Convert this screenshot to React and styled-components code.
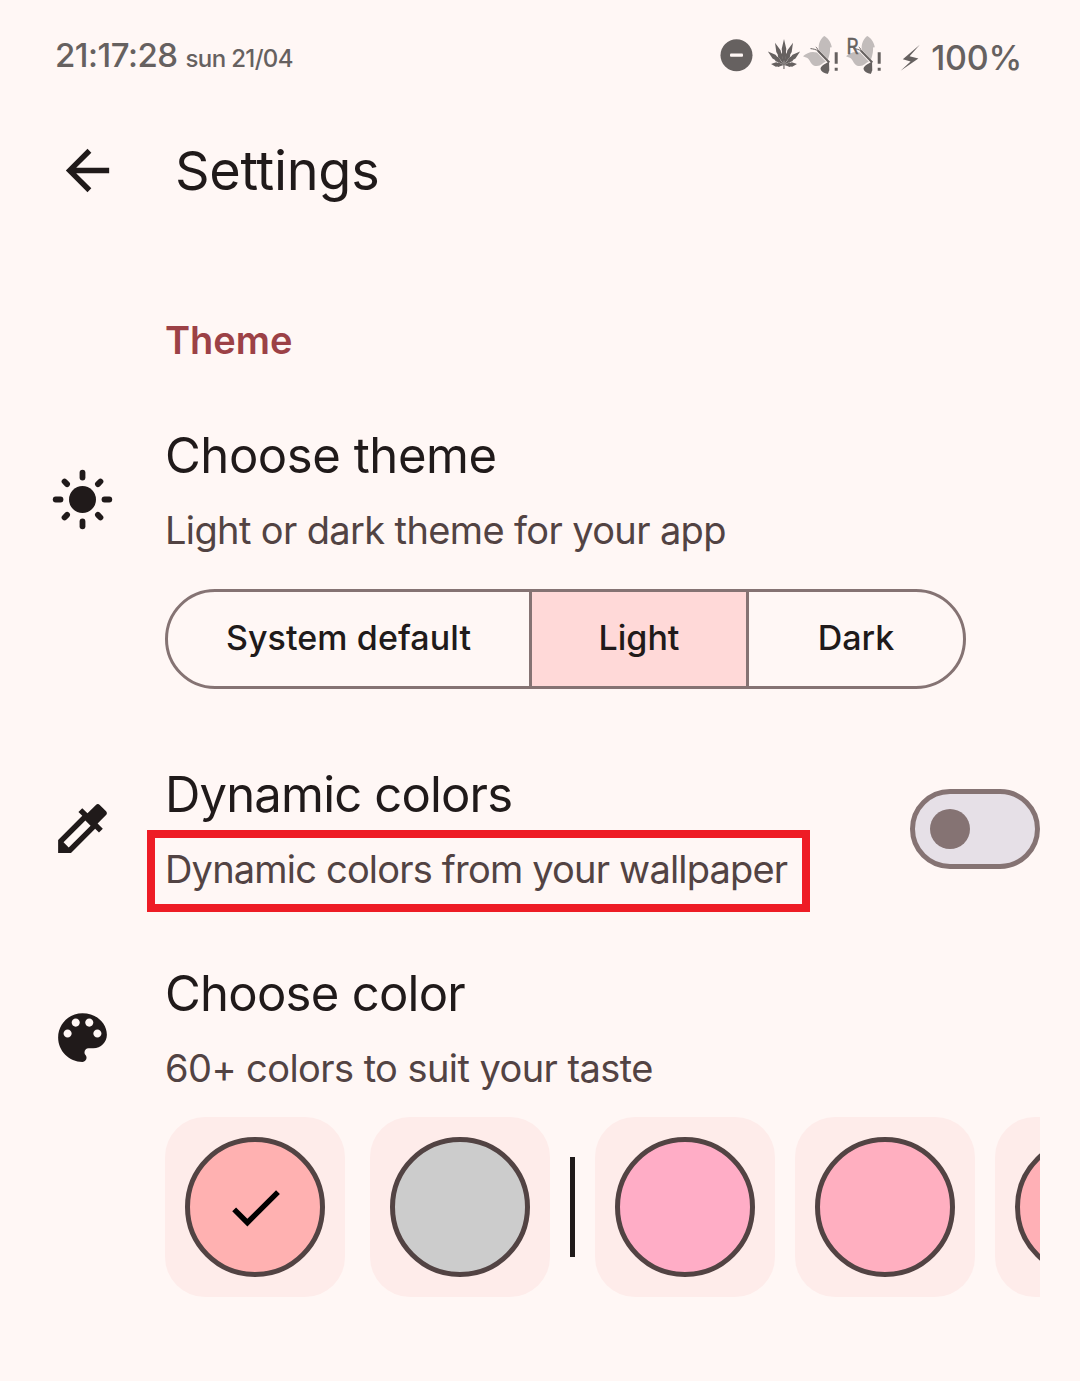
import React from "react";
import styled, { createGlobalStyle } from "styled-components";

const Global = createGlobalStyle`
  * { box-sizing: border-box; }
  body { margin: 0; background: #fff7f5; font-family: Inter, "Liberation Sans", sans-serif; color: #201a1a; }
  svg { display: block; flex: none; }
`;
const Screen = styled.main`
  width: 1080px; height: 1381px; overflow: hidden; background: #fff7f5;
  display: flex; flex-direction: column;
`;
const StatusBar = styled.header`
  height: 110px; padding: 0 58px 0 55px; display: flex; justify-content: space-between; color: #666160;
`;
const Clock = styled.div`
  display: flex; align-items: baseline; gap: 8px; height: 50px; margin-top: 30px; line-height: 50px;
`;
const Label = styled.span`
  font-size: ${(p) => p.$size}px;
  font-weight: ${(p) => p.$weight || 400};
  letter-spacing: ${(p) => p.$track || 0}px;
  white-space: nowrap;
`;
const Indicators = styled.div`
  display: flex; align-items: center; height: 50px; margin-top: 30px;
`;
const Battery = styled.div`
  margin: 6px 0 0 10px; line-height: 50px; display: flex;
`;
const TopBar = styled.nav`
  height: 120px; padding-left: 55px; display: flex; align-items: center; gap: 55px;
`;
const Title = styled.h1`
  margin: 0; padding-top: 2px; font-weight: 400; line-height: 1; display: flex;
`;
const SectionTitle = styled.h2`
  margin: 85px 0 60px 165px; height: 50px; line-height: 50px; color: #9c4146; display: flex;
`;
const Row = styled.section`
  display: flex; gap: 50px; align-items: center;
  padding: 0 40px 0 50px; margin-bottom: ${(p) => p.$after || 0}px;
`;
const IconCell = styled.div`
  flex: none; width: 65px; display: flex; justify-content: center; padding-bottom: ${(p) => p.$lift || 0}px;
`;
const Body = styled.div` flex: 1; min-width: 0; display: flex; flex-direction: column; `;
const RowTitle = styled.div` height: 61px; line-height: 62px; margin-bottom: 19px; `;
const RowText = styled.div`
  position: relative; align-self: flex-start; height: 50px; line-height: 51px; color: #524343;
`;
const Highlight = styled.div`
  position: absolute; left: -18px; top: -14px; width: 663px; height: 82px; border: 8px solid #ee1c25;
`;
const Segments = styled.div`
  margin-top: 34px; width: 801px; height: 100px; display: flex; border: 3px solid #857373;
  border-radius: 50px; overflow: hidden;
`;
const Segment = styled.button`
  border: 0; border-left: ${(p) => (p.$first ? 0 : 3)}px solid #857373; padding: 0 0 4px; margin: 0;
  width: ${(p) => p.$width}px; background: ${(p) => (p.$active ? "#ffd9d8" : "transparent")};
  color: #201a1a; font-family: inherit; display: flex; align-items: center; justify-content: center;
`;
const Switch = styled.div`
  flex: none; width: 130px; height: 80px; border: 5px solid #857373; border-radius: 40px; background: #e6e0e7;
  display: flex; align-items: center; padding-left: 15px;
`;
const Thumb = styled.div` width: 40px; height: 40px; border-radius: 50%; background: #857373; `;
const Swatches = styled.div`
  margin-top: 24px; display: flex; align-items: center; gap: 20px; overflow: hidden; height: 180px;
`;
const Tile = styled.div`
  flex: none; width: 180px; height: 180px; border-radius: 40px; background: #feecea; padding: 20px;
  margin-right: ${(p) => p.$after || 0}px;
`;
const Dot = styled.div`
  width: 140px; height: 140px; border-radius: 50%; border: 5px solid #524343; background: ${(p) => p.$color};
  display: flex; align-items: center; justify-content: center;
`;
const Divider = styled.div` flex: none; width: 5px; height: 100px; background: #201a1a; `;

const Icon = ({ d, size = 65, color = "#201a1a" }) => (
  <svg width={size} height={size} viewBox="0 0 24 24" fill={color}><path d={d} /></svg>
);
const BACK = "M20 11H7.83l5.59-5.59L12 4l-8 8 8 8 1.41-1.41L7.83 13H20v-2z";
const CHECK = "M9 16.17L4.83 12l-1.42 1.41L9 19 21 7l-1.41-1.41z";
const DROPPER = "M20.71 5.63l-2.34-2.34c-.39-.39-1.02-.39-1.41 0l-3.12 3.12-1.93-1.91-1.41 1.41 1.42 1.42L3 16.25V21h4.75l8.92-8.92 1.42 1.42 1.41-1.41-1.92-1.92 3.12-3.12c.4-.4.4-1.03.01-1.42zM6.92 19L5 17.08l8.06-8.06 1.92 1.92L6.92 19z";
const PALETTE = "M12 3c-4.97 0-9 4.03-9 9s4.03 9 9 9c.83 0 1.5-.67 1.5-1.5 0-.39-.15-.74-.39-1.01-.23-.26-.38-.61-.38-.99 0-.83.67-1.5 1.5-1.5H16c2.76 0 5-2.24 5-5 0-4.42-4.03-8-9-8zm-5.5 9c-.83 0-1.5-.67-1.5-1.5S5.67 9 6.5 9 8 9.67 8 10.5 7.33 12 6.5 12zm3-4C8.67 8 8 7.33 8 6.5S8.67 5 9.5 5s1.5.67 1.5 1.5S10.33 8 9.5 8zm5 0c-.83 0-1.5-.67-1.5-1.5S13.67 5 14.5 5s1.5.67 1.5 1.5S15.33 8 14.5 8zm3 4c-.83 0-1.5-.67-1.5-1.5S16.67 9 17.5 9s1.5.67 1.5 1.5-.67 1.5-1.5 1.5z";

const Sun = () => (
  <svg width="61" height="61" viewBox="-30.5 -30.5 61 61" stroke="#201a1a" strokeWidth="5.8" strokeLinecap="round">
    <circle r="13.5" fill="#201a1a" stroke="none" />
    {[0, 90, 180, 270].map((a) => <line key={a} x1="0" x2="0" y1="-22" y2="-26.8" transform={`rotate(${a})`} />)}
    {[45, 135, 225, 315].map((a) => <line key={a} x1="0" x2="0" y1="-21.8" y2="-25.4" transform={`rotate(${a})`} />)}
  </svg>
);

const Leaf = () => (
  <svg width="36" height="50" viewBox="6 0 36 50" fill="#666160">
    {[[0, 26], [-22, 24], [22, 24], [-50, 21], [50, 21], [-86, 13], [86, 13]].map(([a, l]) => (
      <path
        key={a}
        transform={`translate(24 35) rotate(${a})`}
        d={`M0 0L-1.3 ${-l * 0.25}L-2.5 ${-l * 0.42}L-1.9 ${-l * 0.5}L-2.3 ${-l * 0.62}L0 ${-l}L2.3 ${-l * 0.62}L1.9 ${-l * 0.5}L2.5 ${-l * 0.42}L1.3 ${-l * 0.25}Z`}
      />
    ))}
    <path d="M23.4 34h1.1v5h-1.1z" />
  </svg>
);

const Butterfly = ({ letter }) => (
  <svg width="43" height="50" viewBox="42 0 43 50">
    <path fill="#c2bcbb" d="M64.3 6C67.5 7.5 71 12 71.8 17.2L70 17.6C70.3 20 69.8 25 68 29.5L58.8 19.5C58 14 60.5 8.5 64.3 6z" />
    <path fill="#c2bcbb" d="M43 26.2C47 22.5 52 20.8 57 22.6L65.8 31.8C62 32.6 61.5 36.6 55.5 36C51.5 35.5 50.5 31.5 48.5 29C47 27.2 45.5 27.3 43 26.2z" />
    <path fill="#666160" d="M60.5 38.5C61.5 35 66 33.5 69 31.5L69.3 40.5C68.5 41 69 42.8 67.5 44C64.5 43 61 42 60.5 38.5z" />
    <path fill="none" stroke="#666160" strokeWidth="2.1" d="M58 20.8L69.3 32.6" />
    <path fill="none" stroke="#666160" strokeWidth="1" d="M58.5 21.5C56 19.2 53.5 19 50.5 18.6M58.2 21C57.6 18.8 57.2 18 55.8 17" />
    <path fill="#666160" d="M74.7 22.3h3v11.4h-3zM74.7 37.7h3v3h-3z" />
    {letter && <text x="43.4" y="24.2" fontSize="21.5" textLength="12" lengthAdjust="spacingAndGlyphs" fontFamily="Roboto" fill="#666160" stroke="#666160" strokeWidth="0.4">{letter}</text>}
  </svg>
);

export default function App() {
  return (
    <Screen>
      <Global />
      <StatusBar>
        <Clock>
          <Label $size={33} $weight={500} $track={-0.5}>21:17:28</Label>
          <Label $size={24} $weight={500} $track={-0.65}>sun 21/04</Label>
        </Clock>
        <Indicators>
          <svg width="46" height="50" viewBox="720 30 46 50">
            <circle cx="736.5" cy="55.2" r="16" fill="#666160" />
            <rect x="730" y="53.6" width="13" height="3.2" rx="1" fill="#fff7f5" />
          </svg>
          <Leaf />
          <Butterfly />
          <Butterfly letter="R" />
          <svg width="33" height="50" viewBox="888 30 33 50">
            <path d="M919.8 44.8L902.8 59.2 910.6 61.4 900.6 70.8 918.4 58.6 909.6 56.2z" fill="#666160" />
          </svg>
          <Battery><Label $size={34} $weight={500} $track={-0.25}>100%</Label></Battery>
        </Indicators>
      </StatusBar>
      <TopBar>
        <Icon d={BACK} />
        <Title><Label $size={54} $track={-0.3}>Settings</Label></Title>
      </TopBar>
      <SectionTitle><Label $size={38} $weight={600}>Theme</Label></SectionTitle>
      <Row $after={75}>
        <IconCell $lift={115}><Sun /></IconCell>
        <Body>
          <RowTitle><Label $size={49} $track={-0.43}>Choose theme</Label></RowTitle>
          <RowText><Label $size={38} $track={-0.63}>Light or dark theme for your app</Label></RowText>
          <Segments>
            <Segment $first $width={361}><Label $size={34} $weight={500} $track={0.08}>System default</Label></Segment>
            <Segment $active $width={217}><Label $size={34} $weight={500}>Light</Label></Segment>
            <Segment $width={217}><Label $size={34} $weight={500}>Dark</Label></Segment>
          </Segments>
        </Body>
      </Row>
      <Row $after={69}>
        <IconCell $lift={1}><Icon d={DROPPER} /></IconCell>
        <Body>
          <RowTitle><Label $size={49} $track={-0.83}>Dynamic colors</Label></RowTitle>
          <RowText><Label $size={38} $track={-0.81}>Dynamic colors from your wallpaper</Label><Highlight /></RowText>
        </Body>
        <Switch><Thumb /></Switch>
      </Row>
      <Row>
        <IconCell $lift={185}><Icon d={PALETTE} /></IconCell>
        <Body>
          <RowTitle><Label $size={49} $track={-0.73}>Choose color</Label></RowTitle>
          <RowText><Label $size={38} $track={-0.57}>60+ colors to suit your taste</Label></RowText>
          <Swatches>
            <Tile $after={5}><Dot $color="#ffb1b1"><Icon d={CHECK} color="#000" /></Dot></Tile>
            <Tile><Dot $color="#cccccc" /></Tile>
            <Divider />
            <Tile><Dot $color="#ffadc6" /></Tile>
            <Tile><Dot $color="#ffafc0" /></Tile>
            <Tile><Dot $color="#ffb0b6" /></Tile>
          </Swatches>
        </Body>
      </Row>
    </Screen>
  );
}
